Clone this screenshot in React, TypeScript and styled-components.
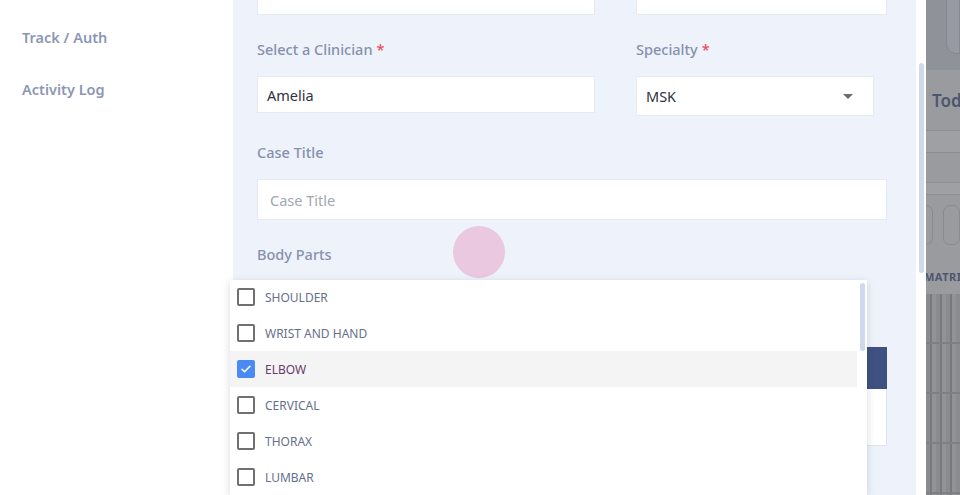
import styled, { createGlobalStyle } from "styled-components";

const GlobalStyle = createGlobalStyle`
  html, body { margin: 0; padding: 0; }
  body {
    width: 960px;
    height: 495px;
    overflow: hidden;
    font-family: "Noto Sans", "Open Sans", sans-serif;
  }
  * { box-sizing: border-box; }
`;

// ── Layout ───────────────────────────────────────────────────────────────────

const Screen = styled.div`
  position: relative;
  display: flex;
  width: 960px;
  height: 495px;
  overflow: hidden;
  background: #fff;
`;

const Sidebar = styled.nav`
  width: 233px;
  flex-shrink: 0;
  background: #fff;
  display: flex;
  flex-direction: column;
  gap: 32px;
  padding: 27px 0 0 22px;
`;

const NavItem = styled.div`
  font-size: 14.5px;
  line-height: 20px;
  font-weight: 600;
  color: #8c97b6;
`;

const Panel = styled.main`
  position: relative;
  width: 683px;
  flex-shrink: 0;
  background: #eef3fb;
  overflow: hidden;
`;

const Form = styled.div`
  width: 630px;
  margin: -26px 0 0 24px;
  display: flex;
  flex-direction: column;
`;

const Row = styled.div`
  display: grid;
  grid-template-columns: 338px 251px;
  column-gap: 41px;
`;

const Field = styled.div<{ $top?: number }>`
  display: flex;
  flex-direction: column;
  padding-top: ${(p) => p.$top ?? 0}px;
`;

const Label = styled.label`
  font-size: 14.5px;
  line-height: 20px;
  font-weight: 500;
  color: #8790ad;
  margin-bottom: 17px;
`;

const Req = styled.span`
  color: #ee4d5a;
  margin-left: 4px;
`;

const Input = styled.div<{ $h?: number; $w?: string; $placeholder?: boolean }>`
  height: ${(p) => p.$h ?? 37}px;
  width: ${(p) => p.$w ?? "100%"};
  background: #fff;
  border: 1px solid #e6ebf3;
  display: flex;
  align-items: center;
  justify-content: space-between;
  padding: 0 ${(p) => (p.$placeholder ? 12 : 9)}px;
  font-size: 14.5px;
  color: ${(p) => (p.$placeholder ? "#a3a7b0" : "#2f3240")};
`;

const Caret = styled.span`
  width: 0;
  height: 0;
  border-left: 5px solid transparent;
  border-right: 5px solid transparent;
  border-top: 5px solid #6b6b6b;
  margin-right: 11px;
`;

const TableHead = styled.div`
  height: 42px;
  background: #3f5180;
  margin-top: 66px;
`;

const TableBody = styled.div`
  height: 57px;
  background: #fff;
  border: 1px solid #dfe3ea;
  border-top: none;
`;

const Touch = styled.div`
  position: absolute;
  left: 220px;
  top: 226px;
  width: 52px;
  height: 52px;
  border-radius: 50%;
  background: #e9c8e0;
`;

const ScrollStrip = styled.div`
  width: 10px;
  flex-shrink: 0;
  background: #fff;
  padding: 63px 0 0 3px;
`;

const Thumb = styled.div<{ $h: number; $w?: number }>`
  width: ${(p) => p.$w ?? 5}px;
  height: ${(p) => p.$h}px;
  border-radius: 3px;
  background: #d0d8ec;
`;

// ── Dimmed app behind the drawer ─────────────────────────────────────────────

const Backdrop = styled.div`
  flex: 1;
  background: #9a9b9f;
  display: flex;
  flex-direction: column;
  overflow: hidden;
`;

const BackTop = styled.div`
  height: 70px;
  background: #8f9299;
  padding-left: 20px;
`;

const BackCard = styled.div`
  height: 54px;
  border: 1px solid #858891;
  border-top: none;
  border-radius: 0 0 0 10px;
  background: #979aa1;
`;

const BackTitle = styled.div`
  height: 60px;
  padding: 19px 0 0 6px;
  font-size: 17px;
  font-weight: 600;
  color: #4d5670;
  white-space: nowrap;
`;

const BackBand = styled.div<{ $h: number; $gap: number }>`
  height: ${(p) => p.$h}px;
  border-top: 1px solid #8c8e93;
  border-bottom: 1px solid #8c8e93;
  background: #9fa0a4;
  margin-bottom: ${(p) => p.$gap}px;
`;

const BackChips = styled.div`
  display: flex;
  gap: 10px;
  margin-left: -10px;
  height: 40px;
`;

const Chip = styled.div`
  width: 26px;
  border: 1px solid #888a90;
  border-radius: 7px;
`;

const BackMatrix = styled.div`
  padding: 24px 0 10px 0;
  font-size: 11px;
  font-weight: 700;
  letter-spacing: 0.5px;
  color: #4d5670;
  white-space: nowrap;
  margin-left: -2px;
`;

const Columns = styled.div`
  flex: 1;
  background: repeating-linear-gradient(
      180deg,
      transparent 0 48px,
      #7e8084 48px 50px
    ),
    repeating-linear-gradient(
      90deg,
      #8a8b8f 0 4px,
      #77797d 4px 6px,
      #929397 6px 10px
    );
`;

// ── Dropdown ─────────────────────────────────────────────────────────────────

const Menu = styled.div`
  position: absolute;
  left: 230px;
  top: 280px;
  width: 637px;
  bottom: 0;
  background: #fff;
  box-shadow: 0 2px 8px rgba(40, 50, 80, 0.18);
  display: flex;
  overflow: hidden;
`;

const Options = styled.div`
  width: 627px;
  margin-top: -1px;
  display: flex;
  flex-direction: column;
`;

const MenuScroll = styled.div`
  padding: 3px 0 0 3px;
`;

const Option = styled.div<{ $active?: boolean }>`
  height: 36px;
  flex-shrink: 0;
  display: flex;
  align-items: center;
  gap: 10px;
  padding-left: 7px;
  background: ${(p) => (p.$active ? "#f4f4f4" : "transparent")};
  font-size: 12px;
  color: #66708c;
  text-transform: uppercase;
`;

const Box = styled.span<{ $checked?: boolean }>`
  width: 18px;
  height: 18px;
  border-radius: 2px;
  border: 2px solid ${(p) => (p.$checked ? "#4a8af4" : "#707070")};
  background: ${(p) => (p.$checked ? "#4a8af4" : "#fff")};
  display: flex;
  align-items: center;
  justify-content: center;
`;

const OptionText = styled.span<{ $checked?: boolean }>`
  color: ${(p) => (p.$checked ? "#6a3b6e" : "#66708c")};
`;

const PARTS = ["Shoulder", "Wrist and Hand", "Elbow", "Cervical", "Thorax", "Lumbar"];

export default function App() {
  return (
    <>
      <GlobalStyle />
      <Screen>
        <Sidebar>
          <NavItem>Track / Auth</NavItem>
          <NavItem>Activity Log</NavItem>
        </Sidebar>

        <Panel>
          <Form>
            <Row>
              <Input $h={41} />
              <Input $h={41} />
            </Row>
            <Row>
              <Field $top={24}>
                <Label>
                  Select a Clinician<Req>*</Req>
                </Label>
                <Input>Amelia</Input>
              </Field>
              <Field $top={24}>
                <Label>
                  Specialty<Req>*</Req>
                </Label>
                <Input $h={40} $w="238px">
                  MSK
                  <Caret />
                </Input>
              </Field>
            </Row>
            <Field $top={26}>
              <Label>Case Title</Label>
              <Input $h={41} $placeholder>
                Case Title
              </Input>
            </Field>
            <Field $top={24}>
              <Label>Body Parts</Label>
            </Field>
            <TableHead />
            <TableBody />
          </Form>
          <Touch />
        </Panel>

        <ScrollStrip>
          <Thumb $h={210} />
        </ScrollStrip>

        <Backdrop>
          <BackTop>
            <BackCard />
          </BackTop>
          <BackTitle>Today</BackTitle>
          <BackBand $h={23} $gap={29} />
          <BackBand $h={13} $gap={10} />
          <BackChips>
            <Chip />
            <Chip />
          </BackChips>
          <BackMatrix>MATRIX</BackMatrix>
          <Columns />
        </Backdrop>

        <Menu>
          <Options>
            {PARTS.map((p) => {
              const checked = p === "Elbow";
              return (
                <Option key={p} $active={checked}>
                  <Box $checked={checked}>
                    {checked && (
                      <svg width="12" height="12" viewBox="0 0 24 24">
                        <path
                          d="M4 12.5l5 5L20 6.5"
                          fill="none"
                          stroke="#fff"
                          strokeWidth="3.2"
                          strokeLinecap="round"
                          strokeLinejoin="round"
                        />
                      </svg>
                    )}
                  </Box>
                  <OptionText $checked={checked}>{p}</OptionText>
                </Option>
              );
            })}
          </Options>
          <MenuScroll>
            <Thumb $h={68} $w={5} />
          </MenuScroll>
        </Menu>
      </Screen>
    </>
  );
}
